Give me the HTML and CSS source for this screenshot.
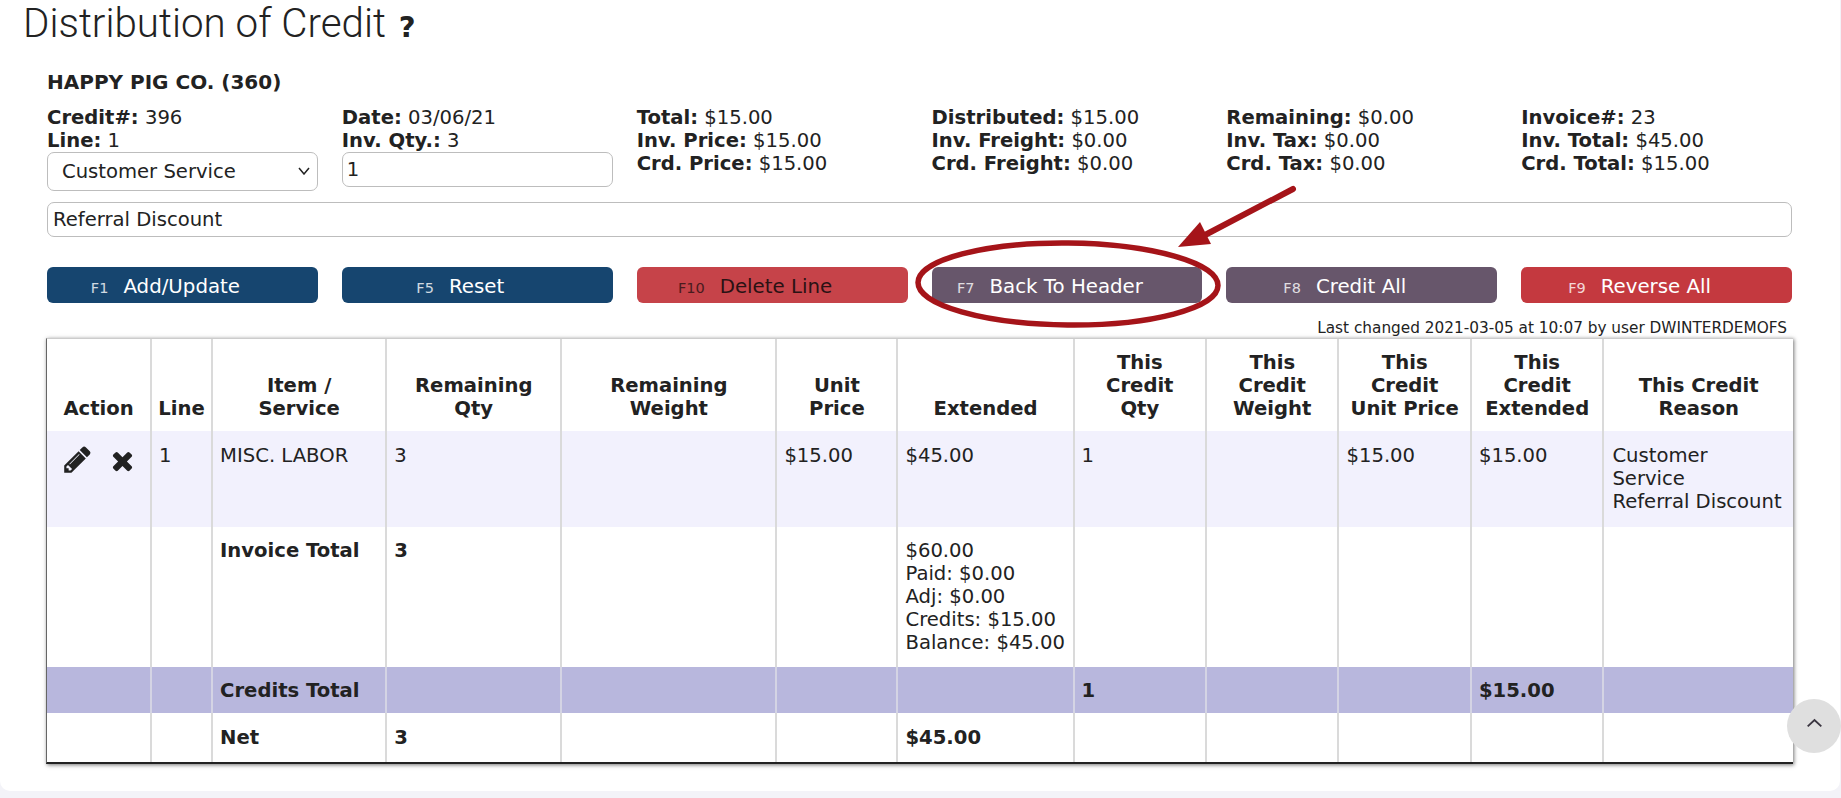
FILE: index.html
```html
<!DOCTYPE html>
<html lang="en">
<head>
<meta charset="utf-8">
<title>Distribution of Credit</title>
<link rel="stylesheet" href="styles.css">
</head>
<body>
<main class="card">
  <h1 class="title">Distribution of Credit <span class="help">?</span></h1>
  <section class="content">
    <h2 class="customer">HAPPY PIG CO. (360)</h2>
    <div class="info-grid">
      <div class="info">
        <div><b>Credit#:</b> 396</div>
        <div><b>Line:</b> 1</div>
        <div class="select-wrap">
          <select class="field select"><option>Customer Service</option></select>
          <svg class="chevron" viewBox="0 0 12 8"><path d="M1 1 L6 7 L11 1"/></svg>
        </div>
      </div>
      <div class="info">
        <div><b>Date:</b> 03/06/21</div>
        <div><b>Inv. Qty.:</b> 3</div>
        <input class="field qty" type="text" value="1">
      </div>
      <div class="info">
        <div><b>Total:</b> $15.00</div>
        <div><b>Inv. Price:</b> $15.00</div>
        <div><b>Crd. Price:</b> $15.00</div>
      </div>
      <div class="info">
        <div><b>Distributed:</b> $15.00</div>
        <div><b>Inv. Freight:</b> $0.00</div>
        <div><b>Crd. Freight:</b> $0.00</div>
      </div>
      <div class="info">
        <div><b>Remaining:</b> $0.00</div>
        <div><b>Inv. Tax:</b> $0.00</div>
        <div><b>Crd. Tax:</b> $0.00</div>
      </div>
      <div class="info">
        <div><b>Invoice#:</b> 23</div>
        <div><b>Inv. Total:</b> $45.00</div>
        <div><b>Crd. Total:</b> $15.00</div>
      </div>
    </div>
    <input class="field reason" type="text" value="Referral Discount">
    <div class="actions">
      <button class="btn blue"><small>F1</small>Add/Update</button>
      <button class="btn blue"><small>F5</small>Reset</button>
      <button class="btn red-dark"><small>F10</small>Delete Line</button>
      <button class="btn purple"><small>F7</small>Back To Header</button>
      <button class="btn purple"><small>F8</small>Credit All</button>
      <button class="btn red"><small>F9</small>Reverse All</button>
    </div>
    <p class="changed">Last changed 2021-03-05 at 10:07 by user DWINTERDEMOFS</p>
    <table class="grid">
      <colgroup>
        <col class="w-action"><col class="w-line"><col class="w-item"><col class="w-rqty"><col class="w-rwt"><col class="w-unit"><col class="w-ext"><col class="w-tc"><col class="w-tc"><col class="w-tc"><col class="w-tc"><col class="w-reason">
      </colgroup>
      <thead>
        <tr>
          <th>Action</th><th>Line</th><th>Item /<br>Service</th><th>Remaining<br>Qty</th><th>Remaining<br>Weight</th><th>Unit<br>Price</th><th>Extended</th><th>This<br>Credit<br>Qty</th><th>This<br>Credit<br>Weight</th><th>This<br>Credit<br>Unit Price</th><th>This<br>Credit<br>Extended</th><th>This Credit<br>Reason</th>
        </tr>
      </thead>
      <tbody>
        <tr class="row-line">
          <td class="icons">
            <svg class="ico pencil" viewBox="0 0 1792 1792"><path d="M491 1536l91-91-235-235-91 91v107h128v128h107zm523-928q0-22-22-22-10 0-17 7l-542 542q-7 7-7 17 0 22 22 22 10 0 17-7l542-542q7-7 7-17zm-54-192l416 416-832 832h-416v-416zm683 96q0 53-37 90l-166 166-416-416 166-165q36-38 90-38 53 0 91 38l235 234q37 39 37 91z"/></svg>
            <svg class="ico cross" viewBox="0 0 1792 1792"><path d="M1490 1322q0 40-28 68l-136 136q-28 28-68 28t-68-28l-294-294-294 294q-28 28-68 28t-68-28l-136-136q-28-28-28-68t28-68l294-294-294-294q-28-28-28-68t28-68l136-136q28-28 68-28t68 28l294 294 294-294q28-28 68-28t68 28l136 136q28 28 28 68t-28 68l-294 294 294 294q28 28 28 68z"/></svg>
          </td>
          <td>1</td><td>MISC. LABOR</td><td>3</td><td></td><td>$15.00</td><td>$45.00</td><td>1</td><td></td><td>$15.00</td><td>$15.00</td><td class="c-reason">Customer Service<br>Referral Discount</td>
        </tr>
        <tr class="row-invoice">
          <td></td><td></td><td><b>Invoice Total</b></td><td><b>3</b></td><td></td><td></td>
          <td class="c-money">$60.00<br>Paid: $0.00<br>Adj: $0.00<br>Credits: $15.00<br>Balance: $45.00</td>
          <td></td><td></td><td></td><td></td><td></td>
        </tr>
        <tr class="row-credits">
          <td></td><td></td><td><b>Credits Total</b></td><td></td><td></td><td></td><td></td><td><b>1</b></td><td></td><td></td><td><b>$15.00</b></td><td></td>
        </tr>
        <tr class="row-net">
          <td></td><td></td><td><b>Net</b></td><td><b>3</b></td><td></td><td></td><td><b>$45.00</b></td><td></td><td></td><td></td><td></td><td></td>
        </tr>
      </tbody>
    </table>
  </section>
</main>
<svg class="callout" viewBox="0 0 1841 798" aria-hidden="true">
  <ellipse cx="1068" cy="284" rx="150" ry="41" transform="rotate(0.6 1068 284)"/>
  <path class="shaft" d="M1293 189 L1205 235"/>
  <path class="head" d="M1178 247 L1200 222 L1211 244 Z"/>
</svg>
<button class="to-top" aria-label="Back to top">
  <svg viewBox="0 0 20 12"><path d="M2 10.500 L10 3 L18 10.500"/></svg>
</button>
</body>
</html>
```

FILE: styles.css
```css
* { box-sizing: border-box; }
html, body { margin: 0; padding: 0; height: 100%; }
body {
  background: #f3f3f8;
  color: #222;
  font-family: "DejaVu Sans", Verdana, sans-serif;
  font-size: 19.6px;
  line-height: 23px;
  overflow: hidden;
}
.card {
  width: 1840px;
  height: 791px;
  background: #fff;
  border-radius: 0 0 10px 10px;
  padding: 0 48px 0 47px;
}
.title {
  margin: 0 0 0 -24px;
  height: 49px;
  font-family: Roboto, sans-serif;
  font-weight: 300;
  font-size: 40.3px;
  line-height: 47px;
  color: #222;
}
.help {
  font-family: "DejaVu Sans", sans-serif;
  font-weight: 700;
  font-size: 29px;
  line-height: 40px;
  margin-left: 3px;
}
.customer {
  margin: 22px 0 0;
  font-size: 20px;
  line-height: 23px;
  font-weight: 700;
}
.info-grid {
  margin-top: 12px;
  display: grid;
  grid-template-columns: repeat(6, 1fr);
  column-gap: 24px;
  height: 96px;
}
.info { min-width: 0; }
.field {
  display: block;
  width: 100%;
  background: #fff;
  border: 1px solid #bdbdbd;
  border-radius: 7px;
  color: #222;
  font: 19.6px/23px "DejaVu Sans", Verdana, sans-serif;
  margin: 0;
  outline: none;
}
.select-wrap { position: relative; }
.select { height: 39px; padding: 0 0 0 14px; appearance: none; -webkit-appearance: none; }
.chevron {
  position: absolute;
  right: 8px;
  top: 15px;
  width: 12px;
  height: 8px;
  fill: none;
  stroke: #222;
  stroke-width: 1.500;
}
.qty { height: 35px; padding: 0 4px; }
.reason { height: 35px; padding: 0 5px; margin-top: 0; }
.actions {
  margin-top: 30px;
  display: grid;
  grid-template-columns: repeat(6, 1fr);
  column-gap: 24px;
}
.btn {
  height: 36px;
  border: 0;
  border-radius: 6px;
  color: #fff;
  font: 19.8px/33px "DejaVu Sans", Verdana, sans-serif;
  padding: 3px 34px 0 0;
  white-space: nowrap;
}
.btn small {
  font-size: 14.500px;
  margin-right: 15px;
  opacity: .8;
}
.blue { background: #16456f; }
.purple { background: #67566b; }
.red { background: #c4393f; }
.red-dark { background: #c64349; color: #2a1214; }
.changed {
  margin: 16px 0 0;
  padding-right: 5px;
  text-align: right;
  font-size: 15.300px;
  line-height: 19px;
}
.grid {
  margin: 0 -1px 0 -1px;
  width: 1747px;
  height: 425px;
  table-layout: fixed;
  border-collapse: separate;
  border-spacing: 0;
  box-shadow: 1px 1px 4px rgba(0,0,0,.55);
  border-left: 1px solid #666;
  border-bottom: 2px solid #222;
  border-top: 1px solid #ccc;
}
.w-action { width: 103px; }
.w-line { width: 61px; }
.w-item { width: 174px; }
.w-rqty { width: 175px; }
.w-rwt { width: 215px; }
.w-unit { width: 121px; }
.w-ext { width: 176px; }
.w-tc { width: 132.4px; }
.w-reason { width: 190.400px; }
.grid th, .grid td {
  border-left: 2px solid #dadada;
  padding: 12px 3px 12px 7px;
  font-weight: normal;
  vertical-align: top;
}
.grid th:first-child, .grid td:first-child { border-left: 0; }
.grid th {
  font-weight: 700;
  text-align: center;
  vertical-align: bottom;
  padding: 12px 2px 11px;
}
.grid b { font-weight: 700; }
thead tr { height: 92px; }
.row-line { height: 96px; background: #f2f1fd; }
.row-line td { padding-top: 13px; padding-bottom: 14px; }
.grid .c-reason { padding-left: 8px; padding-right: 9px; }
.row-invoice { height: 140px; }
.row-credits { height: 46px; background: #b8b7dd; }
.row-credits td { border-left-color: #d4d4e4; vertical-align: middle; padding-top: 11px; padding-bottom: 11px; }
.row-net { height: 49px; }
.row-net td { padding-top: 13px; padding-bottom: 13px; }
.grid .icons { padding: 2px 0 0 15px; white-space: nowrap; }
.ico { display: inline-block; fill: #222; vertical-align: top; }
.pencil { width: 31px; height: 31px; margin-top: 11px; }
.cross { width: 29px; height: 29px; margin: 13px 0 0 9px; }
.callout {
  position: absolute;
  left: 0;
  top: 0;
  width: 1841px;
  height: 798px;
  pointer-events: none;
}
.callout ellipse { fill: none; stroke: #a51419; stroke-width: 5.500; }
.callout .shaft { fill: none; stroke: #a51419; stroke-width: 6; stroke-linecap: round; }
.callout .head { fill: #a51419; }
.to-top {
  position: absolute;
  left: 1787px;
  top: 699px;
  width: 54px;
  height: 54px;
  border: 0;
  border-radius: 50%;
  background: #dfdfdf;
  padding: 0;
  display: flex;
  align-items: center;
  justify-content: center;
}
.to-top svg { width: 17px; height: 11px; fill: none; stroke: #3a3540; stroke-width: 2.200; margin-top: -7px; }
```
